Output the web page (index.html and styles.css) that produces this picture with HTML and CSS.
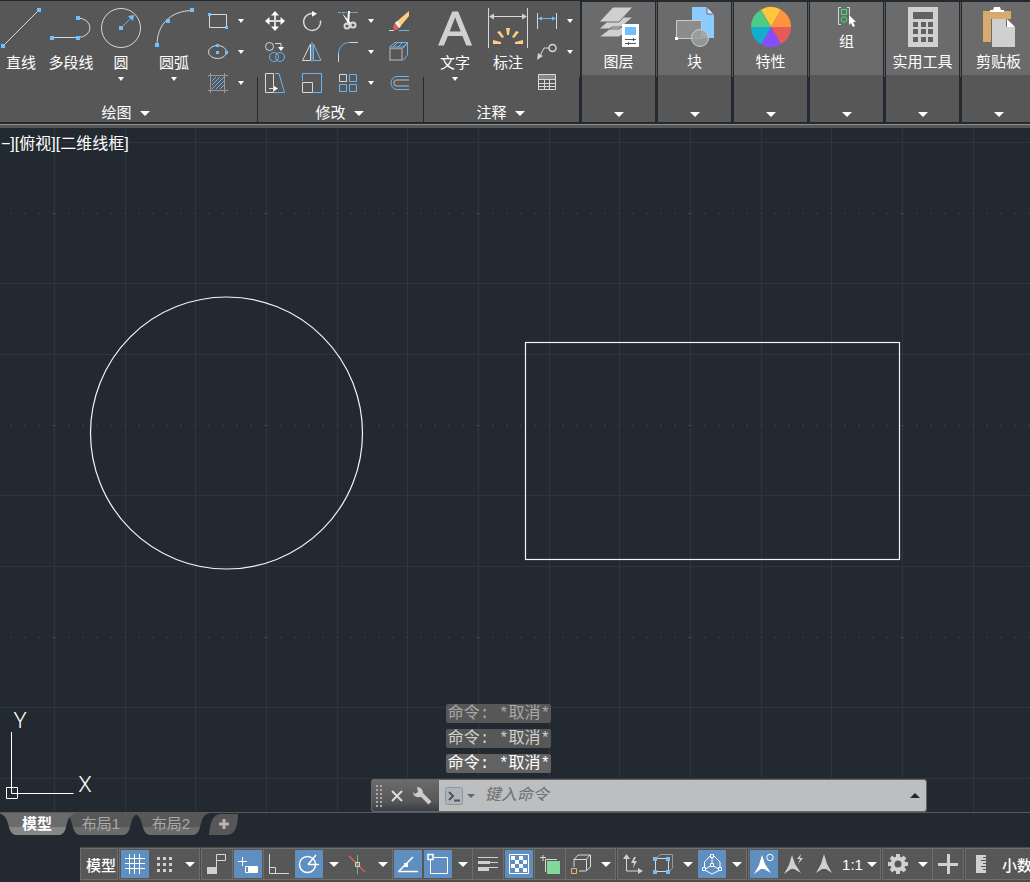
FILE: index.html
```html
<!DOCTYPE html>
<html lang="zh-CN">
<head>
    <meta charset="UTF-8">
    <title>绘图</title>
    <meta name="viewport" content="width=device-width, initial-scale=1.0">
    <link rel="stylesheet" href="styles.css">
</head>
<body>
    <header class="ribbon">
        <section class="panel panel-draw">
            <div class="panel-body">
                <button class="tool tool-line">
                    <svg width="42" height="40"><path class="ln" d="M3 38L39 2"/><path class="pt" d="M1 36h4v4h-4zM37 0h4v4h-4z"/></svg>
                    <span>直线</span>
                </button>
                <button class="tool tool-pline">
                    <svg width="48" height="40"><path class="ln" d="M5 29.500H31A12 9.750 0 0 0 31 10"/><path class="pt" d="M3 28h4v4h-4zM29 28h4v4h-4zM29 8h4v4h-4z"/></svg>
                    <span>多段线</span>
                </button>
                <button class="tool tool-circle">
                    <svg width="42" height="40"><circle class="ln" cx="21" cy="20" r="19.500"/><path class="bl" d="M21 20L31 10"/><path class="pt" d="M19 18h4v4h-4zM34 7l-6 1 5 5z"/></svg>
                    <span>圆</span><i class="arrow"></i>
                </button>
                <button class="tool tool-arc">
                    <svg width="44" height="40"><path class="ln" d="M5 37C5 17 18 3 40 2.500"/><path class="pt" d="M3 35h4v4h-4zM14 11h4v4h-4zM38 0h4v4h-4z"/></svg>
                    <span>圆弧</span><i class="arrow"></i>
                </button>
                <div class="stack">
                    <button class="mini" aria-label="矩形"><svg width="20" height="20"><path class="ln" d="M1.500 3.500h17v13h-17z"/><path class="pt" d="M0 2h3v3h-3zM17 15h3v3h-3z"/></svg><i class="arrow"></i></button>
                    <button class="mini" aria-label="椭圆"><svg width="20" height="20"><ellipse class="ln" cx="9.500" cy="10" rx="9" ry="6.500"/><path class="pt" d="M8 2h3v3h-3zM8 9h3v3h-3zM17 9h3v3h-3z"/></svg><i class="arrow"></i></button>
                    <button class="mini" aria-label="图案填充"><svg width="20" height="20"><path class="bl" d="M4 8l4-4M4 12l8-8M4 16l12-12M8 16l8-8M12 16l4-4"/><path class="ln dim" d="M2.500 0v20M16.500 0v20M0 2.500h20M0 17.500h20"/></svg><i class="arrow"></i></button>
                </div>
            </div>
            <button class="panel-title">绘图<i class="arrow arrow-lg"></i></button>
        </section>

        <section class="panel panel-modify">
            <div class="panel-body">
                <button class="mini" aria-label="移动"><svg width="20" height="20"><path class="ln w2" d="M10 3v14M3 10h14"/><path class="wh" d="M10 0l4 4.500h-8zM10 20l4-4.500h-8zM0 10l4.500-4v8zM20 10l-4.500-4v8z"/></svg></button>
                <button class="mini" aria-label="旋转"><svg width="20" height="20"><path class="ln w15" d="M12 2.500H9A8.500 8.500 0 1 0 18.500 9.500"/><path class="wh" d="M10 0l5 2.800-5 3z"/></svg></button>
                <button class="mini" aria-label="修剪"><svg width="20" height="20"><path class="bl" d="M0 1.500h9" stroke-dasharray="3 1"/><path class="ln dim" d="M12 1.500h8"/><path class="wh" d="M4 2l9 10-2 2zM10 0h2l-1 13-2 1z"/><circle class="ln w2" cx="9" cy="15" r="2.500"/><circle class="ln w2" cx="15" cy="14" r="2.500"/></svg><i class="arrow"></i></button>
                <button class="mini" aria-label="删除"><svg width="20" height="20"><path d="M20 0v5L10 17l-4-5z" fill="#ffcc80"/><path d="M6 12l4 5-2 2H5l-1-3z" fill="#e85c50"/><path d="M6 12l2-2 4 5-2 2z" fill="#eee"/><path class="ln" d="M0 19.500h5"/><path class="bl" d="M10 19.500h10"/></svg></button>

                <button class="mini" aria-label="复制"><svg width="20" height="20"><circle class="ln" cx="4.500" cy="4.500" r="4"/><circle class="bl" cx="9" cy="15" r="4.500"/><circle class="bl" cx="15" cy="15" r="4.500"/><path class="ln" d="M10 1.500h6V6"/><path class="wh" d="M13 5h6l-3 4z"/></svg></button>
                <button class="mini" aria-label="镜像"><svg width="20" height="20"><path class="ln" d="M8.500 2v16.500H.500z"/><path class="bl" d="M11.500 2v16.500h7.500z"/><path class="bl" d="M10 0v20"/></svg></button>
                <button class="mini" aria-label="圆角"><svg width="20" height="20"><path class="bl" d="M.500 12C.500 5 5 .500 12 .500"/><path class="ln" d="M.500 12v8M12 .500h8"/></svg><i class="arrow"></i></button>
                <button class="mini" aria-label="分解"><svg width="20" height="20"><path class="bl" d="M.500 5L6 .500h12.500L14 5zM14 6L18.500 1v12L14 18.500"/><path class="bl" d="M8 1L4 5M13 1L9 5"/><path class="ln dim w15" d="M1 6.500h12v11.500h-12z"/></svg></button>

                <button class="mini" aria-label="拉伸"><svg width="20" height="20"><path class="ln" d="M.500 .500h8v19h-8z"/><path class="bl" d="M10 .500h4l5.500 19H9"/><path class="ln" d="M4 15.500h7"/><path class="wh" d="M9 13l4 2.500-4 2.500z"/></svg></button>
                <button class="mini" aria-label="缩放"><svg width="20" height="20"><path class="bl" d="M.500 8V.500h19v19H11"/><path class="ln" d="M.500 9.500h10v10H.500z"/></svg></button>
                <button class="mini" aria-label="阵列"><svg width="20" height="20"><path class="ln" d="M1.500 1.500h7v7h-7z"/><path class="bl" d="M11.500 1.500h7v7h-7zM1.500 11.500h7v7h-7zM11.500 11.500h7v7h-7z"/></svg><i class="arrow"></i></button>
                <button class="mini" aria-label="偏移"><svg width="20" height="20"><path class="bl" d="M20 3.500H8A6 6.500 0 0 0 8 16.500H20"/><path class="ln dim w15" d="M20 7H8A3 3 0 0 0 8 13H20"/></svg></button>
            </div>
            <button class="panel-title">修改<i class="arrow arrow-lg"></i></button>
        </section>

        <section class="panel panel-note">
            <div class="panel-body">
                <button class="tool tool-text">
                    <svg width="40" height="40"><text class="glyph-a" x="20" y="37" text-anchor="middle">A</text></svg>
                    <span>文字</span><i class="arrow"></i>
                </button>
                <button class="tool tool-dim">
                    <svg width="40" height="40"><path class="ln" d="M.500 0v40M39.500 0v40M3 8.500h34"/><path class="gr" d="M1 8.500l5-3v6zM39 8.500l-5-3v6z"/><path d="M18 20h4l-1 7h-2zM9 24l3-1 4 6-2 1zM31 24l-3-1-4 6 2 1zM5 32l8 2v2H5zM35 32l-8 2v2h8z" fill="#ffcc80"/></svg>
                    <span>标注</span>
                </button>
                <div class="stack">
                    <button class="mini" aria-label="线性"><svg width="20" height="20"><path class="ln" d="M.500 2v16M19.500 2v16"/><path class="bl" d="M2 7.500h16"/><path class="pt" d="M1 7.500l4-2v4zM19 7.500l-4-2v4z"/></svg><i class="arrow"></i></button>
                    <button class="mini" aria-label="引线"><svg width="20" height="20"><circle class="ln w15" cx="15.500" cy="6" r="3.500"/><path class="ln" d="M12 6H7L3 14"/><path class="gr" d="M0 18l1-7 5 3z"/></svg><i class="arrow"></i></button>
                    <button class="mini" aria-label="表格"><svg width="20" height="20"><path class="gr" d="M1 2h18v5H1z" opacity=".4"/><path class="ln" d="M1.500 1.500h17v15h-17zM1 6.500h18M1 10.500h18M1 13.500h18M7.500 6v11M12.500 6v11"/></svg></button>
                </div>
            </div>
            <button class="panel-title">注释<i class="arrow arrow-lg"></i></button>
        </section>

        <div class="folded-row">
            <button class="folded"><span class="folded-top">
                <svg width="40" height="40"><path d="M13 20h21L20 30H0zM13 10h21L20 22H0z" class="gr edge"/><path class="gr edge" d="M14 0h20L20 15H0z"/><path fill="#fff" d="M23 17h17v23H23z"/><path class="pt" d="M26 20h11v8H26z"/><path d="M26 32.500h11M26 36.500h11M34.500 31v3M29.500 35v3" stroke="#555" fill="none"/></svg>
                <span>图层</span></span><i class="arrow arrow-lg"></i></button>
            <button class="folded"><span class="folded-top">
                <svg width="40" height="40"><path d="M17 0h15l7 7v24H17z" fill="#8ccbff"/><path d="M32 0l7 7h-7z" fill="#d4e6f5" stroke="#667"/><path d="M1.500 13.500h25v18h-25z" fill="#8b8d8d" stroke="#ccc"/><circle cx="25" cy="31" r="8.500" fill="#9fa1a1" fill-opacity=".8" stroke="#ccc"/><path class="wh" d="M0 30h3v3H0z"/></svg>
                <span>块</span></span><i class="arrow arrow-lg"></i></button>
            <button class="folded"><span class="folded-top">
                <svg width="40" height="40"><path d="M20 20L10 2.700A20 20 0 0 1 30 2.700z" fill="#ffc53d"/><path d="M20 20L30 2.700A20 20 0 0 1 40 20z" fill="#ff9440"/><path d="M20 20H40A20 20 0 0 1 30 37.300z" fill="#e85a5a"/><path d="M20 20L30 37.300A20 20 0 0 1 10 37.300z" fill="#8450ff"/><path d="M20 20L10 37.300A20 20 0 0 1 0 20z" fill="#13adce"/><path d="M20 20H0A20 20 0 0 1 10 2.700z" fill="#50cb83"/></svg>
                <span>特性</span></span><i class="arrow arrow-lg"></i></button>
            <button class="folded"><span class="folded-top">
                <svg width="20" height="20"><path class="ln" d="M4 .500H1.500v17H4M10 .500h2.500V8"/><path d="M4.500 2.500h5v5h-5z" fill="#41805a" stroke="#5ed487"/><circle cx="7" cy="12.500" r="2.700" fill="#41805a" stroke="#5ed487"/><path class="wh" d="M12 8l7 7h-3l2 4-2 1-2-4-2 2z"/></svg>
                <span>组</span></span><i class="arrow arrow-lg"></i></button>
            <button class="folded"><span class="folded-top">
                <svg width="40" height="40"><path fill="#d0d0d0" d="M5 0h30v40H5z"/><path fill="#626262" d="M10 5h20v7H10zM10 15h5v5h-5zM18 15h5v5h-5zM25 15h5v5h-5zM10 22h5v5h-5zM18 22h5v5h-5zM25 22h5v5h-5zM10 30h5v5h-5zM18 30h5v5h-5zM25 30h5v5h-5z"/></svg>
                <span>实用工具</span></span><i class="arrow arrow-lg"></i></button>
            <button class="folded"><span class="folded-top">
                <svg width="40" height="40"><path fill="#d8aa6d" d="M4 4h28v8H12v23H4z"/><path class="wh" d="M11 5V3h3l1-3h6l1 3h3v2z"/><path fill="#d0d0d0" d="M13 12h14v8h9v20H13z"/><path class="wh" d="M28 12l8 8h-8z"/></svg>
                <span>剪贴板</span></span><i class="arrow arrow-lg"></i></button>
        </div>
    </header>

    <main class="canvas">
        <svg class="drawing" width="100%" height="100%">
            <defs>
                <pattern id="grid" x="54" y="14" width="212" height="212" patternUnits="userSpaceOnUse">
                    <path class="grid-line" d="M.500 0v212M71.500 0v212M141.500 0v212M0 .500h212M0 141.500h212"/>
                    <path class="grid-dots" d="M0 71.500h212"/>
                </pattern>
            </defs>
            <rect width="100%" height="100%" fill="url(#grid)"/>
            <circle class="shape" cx="226.500" cy="305" r="136"/>
            <rect class="shape" x="525.500" y="214.500" width="374" height="217"/>
        </svg>
        <div class="view-label">−][俯视][二维线框]</div>
        <svg class="ucs" width="100" height="105">
            <path d="M11.500 25v61.500h62M6.500 80.500h11v11h-11z"/>
            <text x="20" y="21" text-anchor="middle">Y</text>
            <text x="85" y="85" text-anchor="middle">X</text>
        </svg>
        <div class="command">
            <div class="history">
                <span class="old">命令: *取消*</span>
                <span class="mid">命令: *取消*</span>
                <span>命令: *取消*</span>
            </div>
            <div class="command-bar">
                <div class="command-tools">
                    <svg width="6" height="24"><path d="M1 1v23M5 1v23" stroke="#aaa" stroke-width="2" stroke-dasharray="2 2"/></svg>
                    <button aria-label="关闭"><svg width="12" height="12"><path d="M1 1l10 10M11 1L1 11" stroke="#ddd" stroke-width="2"/></svg></button>
                    <button aria-label="自定义"><svg width="20" height="20"><path d="M9 8l9 9" stroke="#ccc" stroke-width="4"/><path d="M5 1l1 5-3 2-2-2C1 10 5 13 10 10 13 5 9 1 5 1z" fill="#ccc"/></svg></button>
                </div>
                <button class="prompt" aria-label="最近使用的命令"><svg width="18" height="18"><rect x=".500" y=".500" width="17" height="17" rx="2" fill="#aeb5bb" stroke="#8d969d"/><path d="M4 5l4 4-4 4M9 13.500h6" fill="none" stroke="#4c545b" stroke-width="2"/></svg><i class="arrow"></i></button>
                <input type="text" aria-label="命令" placeholder="键入命令">
                <button class="expand" aria-label="展开"><i class="arrow-up"></i></button>
            </div>
        </div>
    </main>

    <nav class="tabs">
        <button class="tab tab-active"><svg width="70" height="22"><path class="tab-top" d="M-4 0C6 2 5 10 8 17Q10 22 15 22H56Q61 22 63 17C66 9 65 2 74 0z"/><path class="tab-low" d="M7 14H64L63 17Q61 22 56 22H15Q10 22 8 17z"/></svg><span>模型</span></button>
        <button class="tab"><svg width="70" height="22"><path class="tab-top" d="M-4 0C6 2 5 10 8 17Q10 22 15 22H56Q61 22 63 17C66 9 65 2 74 0z"/><path class="tab-low" d="M7 14H64L63 17Q61 22 56 22H15Q10 22 8 17z"/></svg><span>布局1</span></button>
        <button class="tab"><svg width="70" height="22"><path class="tab-top" d="M-4 0C6 2 5 10 8 17Q10 22 15 22H56Q61 22 63 17C66 9 65 2 74 0z"/><path class="tab-low" d="M7 14H64L63 17Q61 22 56 22H15Q10 22 8 17z"/></svg><span>布局2</span></button>
        <button class="tab-add" aria-label="新建布局"><svg width="30" height="22"><path d="M0 22C1 11 3 1 12 1H29C29 11 27 22 17 22z" fill="#575757"/><path d="M10 11h10M15 6v10" stroke="#b5b5b5" stroke-width="3"/></svg></button>
    </nav>

    <footer class="status">
        <div class="group"><button class="model">模型</button></div>
        <div class="group">
            <button class="on" aria-label="栅格"><svg width="20" height="20"><path class="ln" d="M4.500 0v20M9.500 0v20M14.500 0v20M0 4.500h20M0 9.500h20M0 14.500h20"/></svg></button>
            <button aria-label="捕捉"><svg width="20" height="20"><path class="gr" d="M2 3h3v3H2zM8 3h3v3H8zM14 3h3v3h-3zM2 9h3v3H2zM8 9h3v3H8zM14 9h3v3h-3zM2 15h3v3H2zM8 15h3v3H8zM14 15h3v3h-3z"/></svg></button>
            <button class="drop" aria-label="捕捉设置"><i class="arrow arrow-lg"></i></button>
        </div>
        <div class="group">
            <button aria-label="推断约束"><svg width="20" height="20"><path class="gr" d="M0 13h10v7H0z"/><path class="ln" d="M9.500 13V.500h9v6H10"/></svg></button>
            <i class="sep"></i>
            <button class="on" aria-label="动态输入"><svg width="20" height="20"><path class="ln" d="M0 7.500h9M4.500 3v9"/><path class="wh" d="M10 13h10v5H10z"/><path class="ln" d="M7.500 12.500h12v6h-12z"/></svg></button>
            <i class="sep"></i>
            <button aria-label="正交"><svg width="20" height="20"><path class="ln" d="M.500 0v19.500H20M.500 13.500h6v6"/></svg></button>
            <button class="on" aria-label="极轴追踪"><svg width="20" height="20"><circle class="ln w15" cx="8.500" cy="10.500" r="8"/><path class="ln w15" d="M9 10.500h11M9 10.500L17 1"/></svg></button>
            <button class="drop" aria-label="极轴设置"><i class="arrow arrow-lg"></i></button>
            <button aria-label="等轴测"><svg width="20" height="20"><path d="M1 2l16 16" stroke="#d8605c" stroke-width="1.500"/><path d="M9.500 1v19" stroke="#5fbd80"/><path class="ln" d="M7.500 8.500h4v4h-4z"/></svg></button>
            <button class="drop" aria-label="等轴测设置"><i class="arrow arrow-lg"></i></button>
            <i class="sep"></i>
            <button class="on" aria-label="对象捕捉追踪"><svg width="20" height="20"><path class="ln w15" d="M1 17L15 3M0 17.500h20"/><path class="wh" d="M6 9h4v4H6z"/></svg></button>
            <button class="on" aria-label="对象捕捉"><svg width="20" height="20"><path class="ln" d="M6 3.500h13.500v16H2.500V6"/><path class="ln w15" d="M0 .500h5v5H0z"/></svg></button>
            <button class="drop" aria-label="对象捕捉设置"><i class="arrow arrow-lg"></i></button>
            <i class="sep"></i>
            <button aria-label="线宽"><svg width="20" height="20"><path class="gr" d="M0 3h20v1H0zM0 7h12v3H0zM12 8h8v1h-8zM0 13h11v4H0zM11 13h9v1h-9z"/></svg></button>
            <i class="sep"></i>
            <button class="on" aria-label="透明度"><svg width="20" height="20"><path class="ln" d="M.500 .500h19v19H.500z"/><path class="wh" d="M2 2h4v4H2zM10 2h4v4h-4zM6 6h4v4H6zM14 6h4v4h-4zM2 10h4v4H2zM10 10h4v4h-4zM6 14h4v4H6zM14 14h4v4h-4z"/></svg></button>
            <i class="sep"></i>
            <button aria-label="选择循环"><svg width="20" height="20"><path class="ln" d="M0 3.500h6M3 1v6M5.500 18V5.500H17"/><path d="M7 7h13v13H7z" fill="#82d99c"/></svg></button>
            <i class="sep"></i>
            <button aria-label="三维对象捕捉"><svg width="20" height="20"><path class="ln" d="M3 13V5.500L7 1h12.500v12L15 17H8M3 5.500h12.500V17M15.500 5L19 1"/><path d="M.500 14.500h5v5h-5z" fill="none" stroke="#e8b66b"/></svg></button>
            <button class="drop" aria-label="三维对象捕捉设置"><i class="arrow arrow-lg"></i></button>
        </div>
        <div class="group">
            <button aria-label="动态 UCS"><svg width="20" height="20"><path class="ln" d="M3.500 3v14H17"/><path class="gr" d="M3.500 0L7 5H0zM20 17l-5-3v6zM11 3l-3 6h3l-1 5 4-7h-3l2-4z"/></svg></button>
            <button aria-label="选择过滤"><svg width="20" height="20"><path class="ln dim" d="M4 3L8 .500h11.500V14L17 17"/><path class="ln" d="M2.500 4.500h13v13h-13z"/><path class="pt" d="M0 3h4v4H0zM13 3h4v4h-4zM0 16h4v4H0zM13 16h4v4h-4z"/></svg></button>
            <button class="drop" aria-label="过滤设置"><i class="arrow arrow-lg"></i></button>
            <button class="on" aria-label="小控件"><svg width="20" height="20"><path class="ln" d="M10 3v8L2 16M10 11l8 5M8 2L2.500 8v8l7.500 4 8-4V8L12 2"/><path class="box" d="M8.500 .500h3v3h-3zM8.500 9.500h3v3h-3zM.500 13.500h3v3h-3zM16.500 13.500h3v3h-3z"/></svg></button>
            <button class="drop" aria-label="小控件设置"><i class="arrow arrow-lg"></i></button>
        </div>
        <div class="group">
            <button class="on" aria-label="注释可见性"><svg width="20" height="20"><path class="wh" d="M8 1l3 9 6 9-7-4H7l-7 5 5-9z"/><circle class="ln" cx="16" cy="3.500" r="3.200"/></svg></button>
            <button aria-label="自动缩放"><svg width="20" height="20"><path class="gr" d="M8 1l3 9 6 9-7-4H7l-7 5 5-9zM17 0l-4 5h3l-2 5 5-6h-3z"/></svg></button>
            <button aria-label="注释比例"><svg width="20" height="20"><path class="gr" d="M10 0l3 10 5 9-6-4H8l-6 4 5-9z"/></svg></button>
            <button class="scale">1:1<i class="arrow arrow-lg"></i></button>
        </div>
        <div class="group">
            <button aria-label="切换工作空间"><svg width="20" height="20"><circle cx="10" cy="10" r="5.500" fill="none" stroke="#d0d0d0" stroke-width="4"/><path d="M10 0v4M10 16v4M0 10h4M16 10h4M3 3l3 3M14 14l3 3M17 3l-3 3M3 17l3-3" stroke="#d0d0d0" stroke-width="4"/></svg></button>
            <button class="drop" aria-label="工作空间设置"><i class="arrow arrow-lg"></i></button>
            <i class="sep"></i>
            <button aria-label="注释监视器"><svg width="20" height="20"><path class="gr" d="M0 9h9V0h3v9h8v3h-8v8H9v-8H0z"/></svg></button>
        </div>
        <div class="group">
            <button aria-label="单位"><svg width="20" height="20"><path class="gr" d="M5 1h10v2h-3v1h3v2h-5v1h5v2h-3v1h3v2h-5v1h5v2h-3v1h3v3H5z"/></svg></button>
            <button class="units">小数</button>
        </div>
    </footer>
</body>
</html>
```
FILE: styles.css
```css
html, body {
    height: 100%;
    margin: 0;
    overflow: hidden;
}
body {
    display: flex;
    flex-direction: column;
    background: #222930;
    color: #fff;
    font-family: "Liberation Sans", "Noto Sans CJK SC", sans-serif;
    font-size: 15px;
}
button {
    padding: 0;
    border: none;
    background: none;
    color: inherit;
    font: inherit;
    white-space: nowrap;
    cursor: pointer;
}
svg {
    display: block;
    flex: none;
    overflow: visible;
}

/* Icon strokes and fills */
.ln { fill: none; stroke: #d8d8d8; }
.bl { fill: none; stroke: #6cb4f0; }
.dim { stroke: #9a9a9a; }
.w15 { stroke-width: 1.5; }
.w2 { stroke-width: 2; }
.pt { fill: #70bfff; }
.wh { fill: #fff; }
.gr { fill: #d0d0d0; }
.edge { stroke: #6a6a6a; }
.box { fill: #5e8fc0; stroke: #fff; }
.glyph-a {
    fill: #d0d0d0;
    stroke: #d0d0d0;
    font-size: 49px;
}

.arrow, .arrow-up {
    display: block;
    flex: none;
    width: 0;
    height: 0;
    border: 3px solid transparent;
    border-top: 4px solid #fff;
    border-bottom: none;
}
.arrow-lg {
    border-width: 5px 5px 0;
}
.arrow-up {
    border: 5px solid transparent;
    border-top: none;
    border-bottom: 5px solid #222930;
}

/* Ribbon */
.ribbon {
    display: flex;
    flex: none;
    height: 121px;
    background: #575757;
    border-top: 1px solid #222930;
    border-bottom: 2px solid #222930;
    box-shadow: 0 1px #8a8f8c, 0 4px #575757;
    margin-bottom: 4px;
    line-height: 20px;
}
.panel {
    display: flex;
    flex: none;
    flex-direction: column;
    border-right: 1px solid;
    border-image: linear-gradient(transparent 76px, #222930 76px) 1;
}
.panel-body {
    padding-top: 4px;
    height: 93px;
}
.panel-draw .panel-body, .panel-note .panel-body {
    display: flex;
}
.panel-draw { width: 257px; }
.panel-modify { width: 165px; }
.panel-note { width: 155px; }
.panel-modify .panel-body {
    display: grid;
    grid-template-columns: 37px 36px 51px 20px;
    grid-auto-rows: 31px;
    padding-left: 7px;
}
.panel-title {
    display: flex;
    align-items: center;
    justify-content: center;
    gap: 8px;
    padding: 5px 2px 0 0;
}
.panel-draw .panel-title {
    padding-right: 6px;
}
.tool {
    display: flex;
    flex-direction: column;
    align-items: center;
    padding-top: 3px;
}
.tool span {
    margin-top: 5px;
}
.tool .arrow {
    margin-top: 4px;
}
.tool-line, .tool-circle { width: 42px; }
.tool-pline { width: 58px; }
.tool-arc { width: 64px; }
.tool-text { width: 62px; }
.tool-dim { width: 44px; }
.stack {
    padding-left: 2px;
}
.panel-note .stack {
    padding-left: 7px;
}
.mini {
    display: flex;
    align-items: center;
    gap: 10px;
    height: 31px;
}

.folded-row {
    display: flex;
    flex: 1;
    gap: 3px;
    padding: 1px 0 0 2px;
    background: #222930;
    overflow: hidden;
}
.folded {
    position: relative;
    display: flex;
    flex: none;
    flex-direction: column;
    align-items: center;
    width: 73px;
    background: #575757;
}
.folded::after {
    content: "";
    position: absolute;
    right: -2px;
    top: 0;
    width: 1px;
    height: 75px;
    background: #575757;
}
.folded-top {
    display: flex;
    flex-direction: column;
    align-items: center;
    gap: 5px;
    width: 100%;
    height: 68px;
    padding-top: 5px;
    background: #6b6b6b;
}
.folded > .arrow {
    margin-top: 37px;
}

/* Drawing area */
.canvas {
    position: relative;
    flex: 1;
    overflow: hidden;
    border-bottom: 1px solid #5a5a5a;
}
.drawing {
    position: absolute;
    inset: 0;
}
.grid-line, .grid-dots {
    fill: none;
    stroke: #2d3541;
}
.grid-dots {
    stroke: #39424f;
    stroke-dasharray: 2 12;
}
.shape {
    fill: none;
    stroke: #f4f4f4;
    stroke-width: 1.2;
}
.view-label {
    position: relative;
    padding: 5px 1px;
    font-size: 16px;
    line-height: 22px;
}
.ucs {
    position: absolute;
    left: 0;
    bottom: 0;
    fill: none;
    stroke: #fff;
}
.ucs text {
    fill: #fff;
    stroke: none;
    font: 300 22px Roboto, sans-serif;
}

/* Command line */
.command {
    position: absolute;
    left: 36%;
    right: 10%;
    bottom: 0;
}
.history {
    display: flex;
    flex-direction: column;
    align-items: flex-start;
    gap: 6px;
    margin: 0 0 6px 75px;
}
.history span {
    height: 19px;
    padding: 0 1px 0 2px;
    border-radius: 2px;
    background: #626262;
    font: 16px/21px "Liberation Mono", "Noto Sans CJK SC", monospace;
}
.history .mid {
    background: #575757;
    color: #d0d0d0;
}
.history .old {
    background: #575757;
    color: #a8a8a8;
}
.command-bar {
    display: flex;
    height: 31px;
    border: 1px solid #666;
    border-radius: 3px;
    background: #bcbebf;
    overflow: hidden;
}
.command-tools {
    display: flex;
    align-items: center;
    gap: 9px;
    width: 63px;
    padding-left: 4px;
    background: linear-gradient(#6b6b6b, #575757 70%, #363d48);
}
.command-tools button {
    flex: none;
}
.prompt {
    display: flex;
    align-items: center;
    gap: 4px;
    padding: 0 6px;
}
.prompt .arrow {
    border-width: 4px 4px 0;
    border-top-color: #62676b;
}
.command-bar input {
    flex: 1;
    min-width: 0;
    padding: 0 4px 2px;
    border: none;
    outline: none;
    background: none;
    font: italic 16px "Liberation Sans", "Noto Sans CJK SC", sans-serif;
}
.command-bar input::placeholder {
    color: #6e7072;
}
.expand {
    padding: 0 6px;
}

/* Layout tabs */
.tabs {
    display: flex;
    flex: none;
    height: 22px;
    padding-left: 2px;
    margin-bottom: 12px;
}
.tab {
    position: relative;
    width: 70px;
    color: #aaa;
    line-height: 22px;
}
.tab svg {
    position: absolute;
    left: 0;
    top: 0;
}
.tab span {
    position: relative;
}
.tab-top { fill: #575757; }
.tab-low { fill: #6b6b6b; }
.tab-active {
    z-index: 1;
    margin-right: -6px;
    color: #fff;
    font-weight: bold;
}
.tab-active .tab-top { fill: #6b6b6b; }
.tab-active .tab-low { fill: #858786; }
.tab-add {
    margin-left: 3px;
}

/* Status bar */
.status {
    display: flex;
    flex: none;
    gap: 1px;
    height: 32px;
    margin-left: 80px;
    padding: 1px 0 2px;
    background: #4b4b4b;
    overflow: hidden;
}
.group {
    display: flex;
    flex: none;
    align-items: center;
    background: #575757;
    border: 1px solid #6e6e6e;
}
.group button {
    display: flex;
    align-items: center;
    justify-content: center;
    width: 28px;
    height: 28px;
    margin: 0 1px;
}
.group .on {
    background: #5e8fc0;
}
.on .ln {
    stroke: #fff;
}
.group .drop {
    width: 19px;
    margin: 0;
}
.sep {
    width: 1px;
    height: 100%;
    background: #6e6e6e;
}
.group .model {
    justify-content: flex-end;
    width: 34px;
    font-weight: 500;
}
.group .scale {
    gap: 4px;
    width: 39px;
}
.group .units {
    width: 40px;
    font-weight: 500;
}
```
